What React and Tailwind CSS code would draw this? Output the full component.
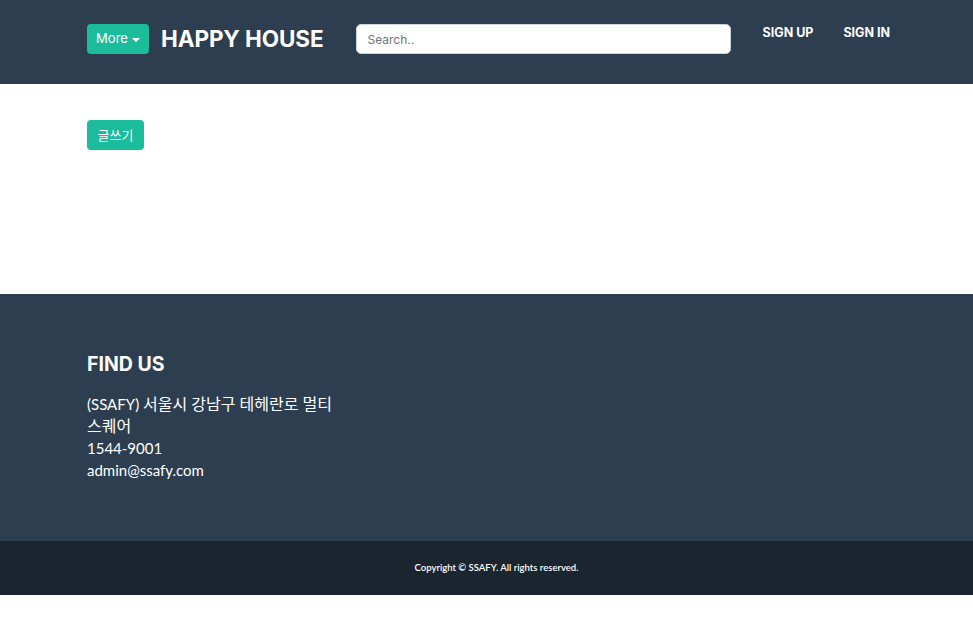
import React from 'react';

export default function App() {
  return (
    <div className="min-h-[618px] bg-white font-['Lato','Noto_Sans_CJK_KR',sans-serif]">
      {/* Navbar */}
      <nav className="h-[84px] bg-[#2c3e50] flex items-center pl-[87px] pr-[83px] font-['Inter','Noto_Sans',sans-serif]">
        <button
          type="button"
          className="h-[30px] w-[62px] mt-[-6px] rounded-[4px] bg-[#1abc9c] text-white text-[13px] flex items-center justify-center gap-[4px]"
        >
          More
          <span className="inline-block w-0 h-0 border-l-[4px] border-r-[4px] border-t-[4px] border-l-transparent border-r-transparent border-t-white mt-[1px]" />
        </button>
        <span className="ml-[12px] mt-[-6px] text-white text-[22.5px] font-bold tracking-[-0.1px]">
          HAPPY HOUSE
        </span>
        <input
          type="text"
          placeholder="Search.."
          className="ml-[33px] mt-[-6px] h-[30px] w-[375px] rounded-[5px] border border-[#ced4da] bg-white px-[10px] text-[12px] text-gray-700 placeholder:text-[#6c757d] outline-none"
        />
        <div className="ml-auto mt-[-17px] flex items-center gap-[30px] text-white text-[12.5px] font-bold">
          <span>SIGN UP</span>
          <span>SIGN IN</span>
        </div>
      </nav>

      {/* Content */}
      <main className="h-[210px] pl-[87px] pt-[36px]">
        <button
          type="button"
          className="h-[30px] w-[57px] rounded-[4px] bg-[#1abc9c] text-white text-[13px] flex items-center justify-center font-['Noto_Sans_CJK_KR',sans-serif]"
        >
          글쓰기
        </button>
      </main>

      {/* Footer */}
      <footer className="h-[247px] bg-[#2c3e50] pl-[87px] pt-[58px] text-white">
        <h4 className="text-[19.5px] font-bold leading-[24px] font-['Inter','Noto_Sans',sans-serif]">FIND US</h4>
        <p className="mt-[17px] text-[15px] leading-[22px]">
          (SSAFY) <span className="text-[16px]">서울시 강남구 테헤란로 멀티</span>
          <br />
          <span className="text-[16px]">스퀘어</span>
          <br />
          1544-9001
          <br />
          admin@ssafy.com
        </p>
      </footer>

      <div className="h-[54px] bg-[#1a252f] flex items-center justify-center pl-[20px] text-white text-[9.5px] font-semibold">
        Copyright © SSAFY. All rights reserved.
      </div>
    </div>
  );
}
